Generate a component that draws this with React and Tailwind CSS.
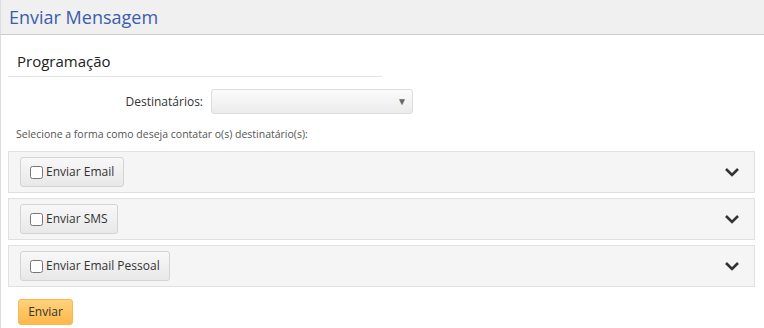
import { useState } from "react";

const Chevron = () => (
    <svg width="16" height="10" viewBox="0 0 16 10" className="shrink-0">
        <path d="M2 2 L8 8 L14 2" fill="none" stroke="#333" strokeWidth="2.6" />
    </svg>
);

const Opcao = ({ label }) => {
    const [on, setOn] = useState(false);
    return (
        <div className="flex items-center justify-between h-[42px] pl-[11px] pr-[14px] bg-[#f5f5f5] border border-[#e0e0e0]">
            <label className="flex items-center h-[30px] px-[9px] gap-[3px] rounded-[3px] border border-[#d4d4d4] bg-gradient-to-b from-[#f8f8f8] to-[#e8e8e8] text-[12px] text-[#333] cursor-pointer">
                <input type="checkbox" checked={on} onChange={() => setOn(!on)} className="w-[13px] h-[13px] m-0" />
                <span>{label}</span>
            </label>
            <Chevron />
        </div>
    );
};

const App = () => {
    return (
        <div className="w-[764px] h-[328px] overflow-hidden bg-white font-['Open_Sans',sans-serif]">
            <div className="h-[35px] bg-[#f0f0f0] border-b border-[#cccccc] border-l border-l-[#dddddd] flex items-center pl-[8px]">
                <span className="text-[18px] text-[#3b5dad] leading-none">Enviar Mensagem</span>
            </div>
            <div className="border-l border-[#dddddd] h-[293px] pl-[7px] pr-[9px]">
                <div className="w-[374px] border-b border-[#e3e3e3] pt-[15px] pb-[3px] pl-[9px] text-[15px] text-[#222]">
                    Programação
                </div>
                <div className="flex items-center mt-[12px] h-[26px]">
                    <span className="w-[203px] text-right text-[12px] text-[#333] pr-[8px]">Destinatários:</span>
                    <div className="w-[202px] h-[25px] rounded-[3px] border border-[#dddddd] bg-gradient-to-b from-[#fcfcfc] to-[#ececec] flex items-center justify-end pr-[5px]">
                        <span className="text-[10px] text-[#666]">▼</span>
                    </div>
                </div>
                <p className="mt-[12px] pl-[8px] text-[10.5px] text-[#555]">Selecione a forma como deseja contatar o(s) destinatário(s):</p>
                <div className="flex flex-col gap-[5px] mt-[9px] w-[747px]">
                    <Opcao label="Enviar Email" />
                    <Opcao label="Enviar SMS" />
                    <Opcao label="Enviar Email Pessoal" />
                </div>
                <button className="mt-[12px] ml-[10px] h-[26px] w-[55px] rounded-[3px] border border-[#f5b94d] bg-gradient-to-b from-[#ffd27a] to-[#ffb74a] text-[12px] text-[#333]">
                    Enviar
                </button>
            </div>
        </div>
    );
};

export default App;
